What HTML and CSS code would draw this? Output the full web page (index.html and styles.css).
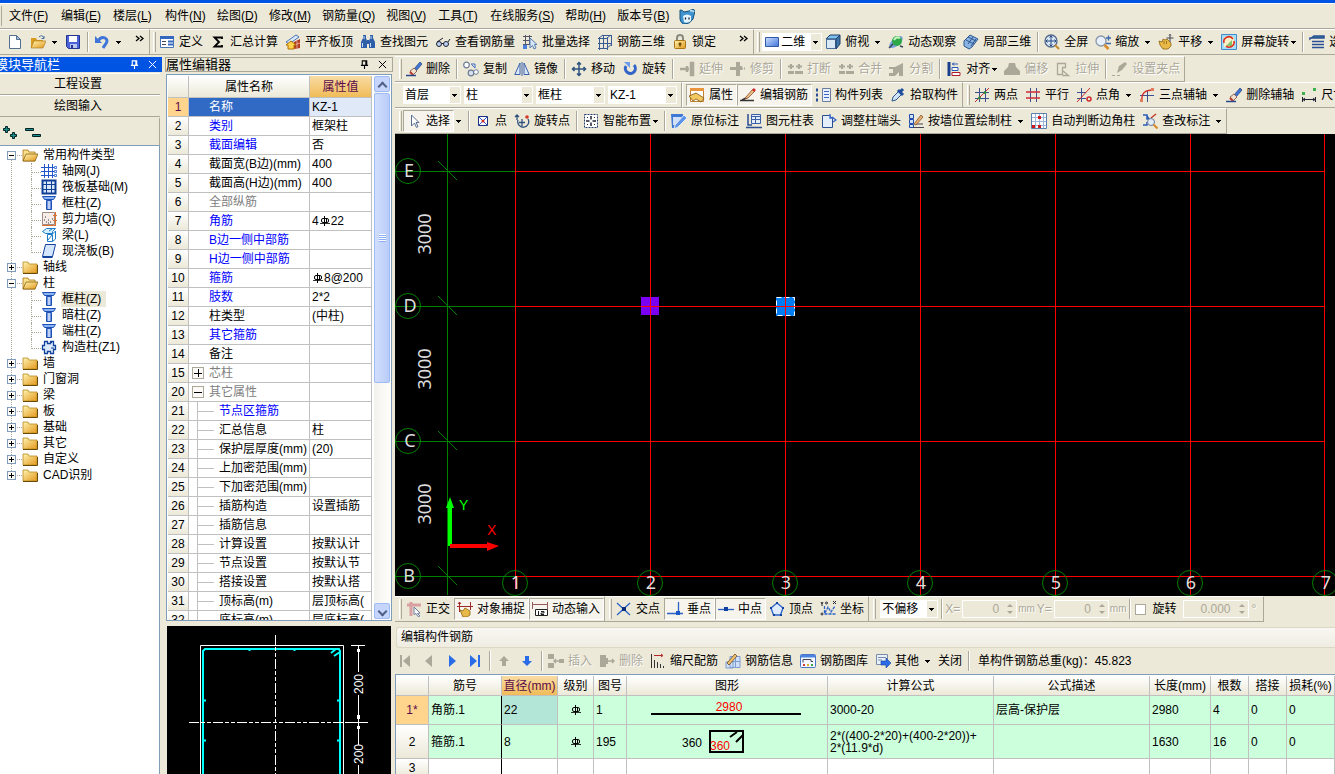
FILE: index.html
```html
<!DOCTYPE html>
<html lang="zh-CN">
<head>
    <meta charset="UTF-8">
    <meta name="viewport" content="width=device-width, initial-scale=1.0">
    <title>钢筋抽样</title>
    <link rel="stylesheet" href="styles.css">
</head>
<body>
    <!-- Icon library -->
    <svg class="defs" width="0" height="0" aria-hidden="true">
        <defs>
            <linearGradient id="gold" x1="0" y1="0" x2="1" y2="1"><stop offset="0" stop-color="#fff3b0"/><stop offset="1" stop-color="#e2981c"/></linearGradient>
            <linearGradient id="blue" x1="0" y1="0" x2="1" y2="1"><stop offset="0" stop-color="#cfe0ff"/><stop offset="1" stop-color="#3f74d8"/></linearGradient>
            <linearGradient id="steel" x1="0" y1="0" x2="1" y2="0"><stop offset="0" stop-color="#1f55c8"/><stop offset=".5" stop-color="#e4efff"/><stop offset="1" stop-color="#1f55c8"/></linearGradient>
        </defs>
        <symbol id="i-new" viewBox="0 0 16 16"><path d="M2.500 1.500h7l4 4v9h-11z" fill="#fff" stroke="#55708f"/><path d="M9.500 1.500v4h4z" fill="#9fc0e8" stroke="#55708f"/></symbol>
        <symbol id="i-open" viewBox="0 0 16 16"><path d="M1 4h5l1 2h6v8H1z" fill="#d99a22"/><path d="M4 7h12l-3 7H1z" fill="url(#gold)" stroke="#a87512" stroke-width=".6"/><path d="M9 3q3-3 5 1m0-2v2.500h-2.500" fill="none" stroke="#4a6f9c"/></symbol>
        <symbol id="i-save" viewBox="0 0 16 16"><path d="M1.500 1.500h13v13h-11l-2-2z" fill="#4a63d8" stroke="#24358f"/><path d="M4 2h8v6H4z" fill="#fff"/><path d="M5 10h7v4H5z" fill="#b9c6ef"/><path d="M6 11h2v3H6z" fill="#24358f"/></symbol>
        <symbol id="i-undo" viewBox="0 0 16 16"><path d="M1 2v7h7z" fill="#3f74d8"/><path d="M4 7q3-5 7-3t0 7l-2 3" fill="none" stroke="#3f74d8" stroke-width="3"/></symbol>
        <symbol id="i-more" viewBox="0 0 10 16"><path d="M1 2l3 2.500L1 7M5 2l3 2.500L5 7" fill="none" stroke="#000" stroke-width="1.300"/></symbol>
        <symbol id="i-define" viewBox="0 0 16 16"><path d="M1.500 2.500h13v11h-13z" fill="#fff" stroke="#4a76b8"/><path d="M1 2h14v3H1z" fill="#3468c0"/><path d="M3 7.500h4M3 10.500h4" stroke="#445"/><path d="M9 7.500h5M9 10.500h5" stroke="#3468c0" stroke-width="2"/></symbol>
        <symbol id="i-sum" viewBox="0 0 16 16"><path d="M12 5V3.500H4.500L9 8l-4.500 4.500H12V11" fill="none" stroke="#000" stroke-width="1.800"/></symbol>
        <symbol id="i-roof" viewBox="0 0 16 16"><path d="M1 8l10-7 3 2-10 7z" fill="#dbe8f8" stroke="#4a76b8"/><path d="M9 8l6-3v9l-6 1z" fill="#b53a22"/><path d="M9 11l6-2M12 7v7" stroke="#f3d0c0" stroke-width=".7"/><path d="M1 11l5-4 5 4H9v4H3v-4z" fill="#ffd34d" stroke="#b07000"/></symbol>
        <symbol id="i-find" viewBox="0 0 16 16"><path d="M3 1h3v3l1 3v7H1V8l2-4zM10 1h3v3l2 4v6H9V7l1-3zM7 6h2v4H7z" fill="#2f5fa8"/><path d="M2.500 9v4M10.500 9v4M4 2v3M11 2v3" stroke="#c6dcf6"/></symbol>
        <symbol id="i-glasses" viewBox="0 0 16 16"><circle cx="4" cy="10" r="2.500" fill="#b8cff0" stroke="#223"/><circle cx="11" cy="10" r="2.500" fill="#b8cff0" stroke="#223"/><path d="M6.500 9.500h2M2 8l6-4M13 8l2-3" fill="none" stroke="#223"/></symbol>
        <symbol id="i-batch" viewBox="0 0 16 16"><path d="M1 2.500h9M1 6.500h9M1 10.500h6M3.500 1v10M7.500 1v10" stroke="#556" fill="none"/><path d="M1 11h4v4H1z" fill="#4a80e0"/><path d="M8 4v10l2.500-2.500L12 15l2-1-1.500-3.500H15z" fill="#d8e6fa" stroke="#5a7fae"/></symbol>
        <symbol id="i-frame" viewBox="0 0 16 16"><path d="M1 4.500h10M5 1.500h10M1 9.500h14M1 14.500h10M2.500 3v13M6.500 1v14M10.500 3v13M14.500 1v11M2 4l4-3M10 4l4-3M10 14l5-4" stroke="#3a5c94" fill="none"/></symbol>
        <symbol id="i-lock" viewBox="0 0 16 16"><path d="M5 7V4q0-3 3-3t3 3v3" fill="none" stroke="#8a8a80" stroke-width="2"/><rect x="2.500" y="6.500" width="11" height="8" rx="1" fill="url(#gold)" stroke="#a87512"/><path d="M8 8.500v4M6.500 10h3" stroke="#6b4700" stroke-width="1.500"/></symbol>
        <symbol id="i-rect" viewBox="0 0 16 16"><path d="M1.500 3.500h13v9h-13z" fill="url(#blue)" stroke="#3358a8"/></symbol>
        <symbol id="i-cube" viewBox="0 0 16 16"><path d="M1 5l4-4h10l-4 4z" fill="#7fc0ee" stroke="#1c3c66"/><path d="M1.500 5.500h9v9h-9z" fill="#d8e8f4" stroke="#4a6f9c"/><path d="M11 5l4-4v9l-4 5z" fill="#3f74a8" stroke="#1c3c66"/></symbol>
        <symbol id="i-orbit" viewBox="0 0 16 16"><ellipse cx="8" cy="8" rx="8" ry="4" transform="rotate(-40 8 8)" fill="#7ca0d8"/><circle cx="9" cy="7" r="5" fill="#2fa84a"/><path d="M6 6q2-4 6-2" stroke="#c4f4c0" stroke-width="2" fill="none"/><path d="M1 14l4-4M12 12l3 1" stroke="#345" stroke-width="1.500"/></symbol>
        <symbol id="i-part3d" viewBox="0 0 16 16"><path d="M1 7l6-6 8 4-6 8-3 2-5-3z" fill="#8ab4e4" stroke="#2d578e"/><path d="M3 6l8 4M5 3l8 4M5 10l5-7M8 12l5-7" stroke="#2d578e" fill="none"/></symbol>
        <symbol id="i-full" viewBox="0 0 16 16"><circle cx="7" cy="7" r="6" fill="#dce9f8" stroke="#51678a" stroke-width="1.300"/><path d="M7 2v10M2 7h10M5.500 3.500L7 2l1.500 1.500M5.500 10.500L7 12l1.500-1.500M3.500 5.500L2 7l1.500 1.500M10.500 5.500L12 7l-1.500 1.500" stroke="#24487e" fill="none"/><path d="M11 11l4 4" stroke="#c88a2a" stroke-width="2"/></symbol>
        <symbol id="i-zoom" viewBox="0 0 16 16"><circle cx="6" cy="7" r="5" fill="#e8f1fb" stroke="#8a97a8" stroke-width="1.300"/><path d="M9.500 11l4 4" stroke="#d88a2a" stroke-width="2.500"/><path d="M11 4h5M13.500 1.500v5M11 9.500h5" stroke="#3d68b0" stroke-width="1.300"/></symbol>
        <symbol id="i-pan" viewBox="0 0 16 16"><path d="M1 7l3 1 1-3 2 1 2-1 4 4v3l-3 3H5l-3-4z" fill="#e8b848" stroke="#8f6410" stroke-width=".8"/><path d="M6 7v3M8.500 7v3" stroke="#8f6410" stroke-width=".8"/><path d="M12 0v8M8.500 4h7M11 1.500L12 .5l1 1" stroke="#445" fill="none"/></symbol>
        <symbol id="i-rotscreen" viewBox="0 0 16 16"><path d="M.5.500h15v15H.5z" fill="#a8dcf4" stroke="#3f8ccc"/><path d="M3 3h10v10H3z" fill="#f6f2c8"/><path d="M5 12l6-6v6z" fill="#86c46a"/><path d="M3 9a5 5 0 019-4M13 7a5 5 0 01-8 5" fill="none" stroke="#e02a1c" stroke-width="1.600"/></symbol>
        <symbol id="i-layers" viewBox="0 0 16 16"><path d="M1 5l4-3h10v2H1zM3 7.500h12M3 10.500h12M3 13.500h12" fill="#2f8c9a" stroke="#2a4f94" stroke-width="1.500"/></symbol>
        <symbol id="i-brush" viewBox="0 0 16 16"><path d="M8 8l6-7 2 2-6 7z" fill="#3f74d8" stroke="#223c70" stroke-width=".7"/><path d="M4 10l4-3 3 3-4 4z" fill="#f0e0d0" stroke="#7a4a3a" stroke-width=".8"/><path d="M4 11l3 3" stroke="#c03a2a" stroke-width="2"/><path d="M0 14.500h10" stroke="#28488c" stroke-width="1.500"/></symbol>
        <symbol id="i-copy" viewBox="0 0 16 16"><circle cx="3.500" cy="4" r="2.800" fill="#fff" stroke="#6c7c94" stroke-width="1.200"/><circle cx="8" cy="12" r="2.800" fill="#d8e0ea" stroke="#6c7c94" stroke-width="1.200"/><circle cx="13" cy="11" r="2.300" fill="#fff" stroke="#6c7c94"/><path d="M8 3h4v4M8.500 3.500L12 7" stroke="#3d68c8" fill="none"/></symbol>
        <symbol id="i-mirror" viewBox="0 0 16 16"><path d="M6 2v11.500H.8zM10 2v11.500h5.200z" fill="#dbe8fa" stroke="#3a60a8"/><path d="M8 1v14" stroke="#3a60a8"/></symbol>
        <symbol id="i-move" viewBox="0 0 16 16"><path d="M8 1v14M1 8h14M6 3.500L8 1.500l2 2M6 12.500l2 2 2-2M3.500 6l-2 2 2 2M12.500 6l2 2-2 2" fill="none" stroke="#2f527e" stroke-width="1.500"/></symbol>
        <symbol id="i-rotate" viewBox="0 0 16 16"><path d="M12 4a5 5 0 11-8 1" fill="none" stroke="#3464c8" stroke-width="3"/><path d="M2 1h6v6z" fill="#6f9cec"/></symbol>
        <symbol id="i-extend" viewBox="0 0 16 16"><path d="M1 8h6M8 5v6M8 8h2M12 2h2v12h-2z" stroke="#aca899" stroke-width="2.500"/></symbol>
        <symbol id="i-trim" viewBox="0 0 16 16"><path d="M6 1h4v4h2v4h-2v6H6V9H0V6h6z" fill="#aca899"/><path d="M12 7.500h4" stroke="#aca899" stroke-width="2" stroke-dasharray="1 1"/></symbol>
        <symbol id="i-break" viewBox="0 0 16 16"><path d="M1 10h6v3H1zM8 10h8v3H8z" fill="#aca899"/><path d="M1 5.500h6M9 5.500h6M4 3v5M12 3v5" stroke="#aca899" stroke-width="2"/></symbol>
        <symbol id="i-split" viewBox="0 0 16 16"><path d="M0 6h6l8-4v13h-4v-4l-4 4H0v-3h4V8H0z" fill="#aca899"/></symbol>
        <symbol id="i-align" viewBox="0 0 16 16"><path d="M3 1v14" stroke="#1b3f8c" stroke-width="3"/><path d="M6 6.500h6v3H6z" fill="#fff" stroke="#2858b8"/><path d="M6 11.500h8v3H6z" fill="#fff" stroke="#b01c2c"/><path d="M6 3h6M8 1.500L6.500 3 8 4.500" stroke="#2858b8" fill="none"/></symbol>
        <symbol id="i-offset" viewBox="0 0 16 16"><path d="M5 2h6l1 4 4 4v4H0v-4l4-4z" fill="#aca899"/></symbol>
        <symbol id="i-stretch" viewBox="0 0 16 16"><path d="M2.500 2.500h8v4h-3v7h-5zM7.500 9.500l6 5h-6" fill="none" stroke="#aca899" stroke-width="1.300"/></symbol>
        <symbol id="i-grip" viewBox="0 0 16 16"><path d="M5 12l2-7 6-4 2 2-5 6z" fill="#aca899"/><path d="M0 14.500h10" stroke="#aca899" stroke-dasharray="3 2"/></symbol>
        <symbol id="i-props" viewBox="0 0 16 16"><path d="M1.500 1.500h13v13h-13z" fill="#fff" stroke="#c08030"/><path d="M1 1h14v3H1z" fill="#e8953c"/><path d="M0 9l7-3 8 5-3 4-5-3-3 2z" fill="#f4c860" stroke="#7a5410" stroke-width=".8"/></symbol>
        <symbol id="i-editbar" viewBox="0 0 16 16"><path d="M0 13.500h14M2 13l6-3" stroke="#333" stroke-width="1.500" fill="none"/><path d="M6 10l7-8 2 2-7 7-3 1z" fill="#e8c088" stroke="#8a4a2a" stroke-width=".8"/><path d="M13 2l2 2" stroke="#d02a2a" stroke-width="2.500"/></symbol>
        <symbol id="i-list" viewBox="0 0 16 16"><path d="M1 3h3M1 8h3M1 13h3" stroke="#2a4f94" stroke-width="3" stroke-dasharray="2 1"/><path d="M7.500 1.500h8v13h-8z" fill="#e8f0fb" stroke="#6a7c9c"/><path d="M9 4.500h5M9 7.500h5M9 10.500h5" stroke="#3d68c8"/></symbol>
        <symbol id="i-pick" viewBox="0 0 16 16"><path d="M2 14l1-4 6-6 3 3-6 6z" fill="#cfe4f8" stroke="#2d578e"/><path d="M8 3l5 5M10 5l3-3" stroke="#1f4c9c" stroke-width="3"/></symbol>
        <symbol id="i-twopt" viewBox="0 0 16 16"><path d="M1 5.500h14M1 11.500h14M5.500 1v14M11.500 1v14" stroke="#3c5090"/><path d="M1 15L15 1" stroke="#c03030"/><circle cx="5.500" cy="11" r="1.500" fill="#2f8c3a"/><circle cx="11" cy="5.500" r="1.500" fill="#2f8c3a"/></symbol>
        <symbol id="i-parallel" viewBox="0 0 16 16"><path d="M5.500 1v14M11.500 1v14" stroke="#3c5090"/><path d="M1 5h14M1 11h14" stroke="#d02a3a" stroke-width="1.500"/></symbol>
        <symbol id="i-angle" viewBox="0 0 16 16"><path d="M1 5.500h9M1 11.500h9M5.500 1v14" stroke="#3c5090"/><path d="M1 15L14 1" stroke="#d02a2a"/><circle cx="13" cy="12" r="2" fill="none" stroke="#d02a2a" stroke-width="1.500"/></symbol>
        <symbol id="i-threept" viewBox="0 0 16 16"><path d="M1 8.500h14M8.500 3v12" stroke="#3c5090"/><path d="M3 13Q2 3 14 3" fill="none" stroke="#d02a2a" stroke-width="1.300"/><path d="M12 1h3v3h-3zM1 12h3v3H1z" fill="#e07a5a"/></symbol>
        <symbol id="i-dim" viewBox="0 0 16 16"><path d="M1 5h3v3H1zM12 1h3v3h-3z" fill="#3fb04a"/><path d="M1.500 10v5M14.500 10v5M2 12.500h12M4 11l-2 1.500L4 14M12 11l2 1.500-2 1.500" stroke="#223" fill="none"/></symbol>
        <symbol id="i-cursor" viewBox="0 0 16 16"><path d="M5.500 2v11l3-3 2 4.500 1.500-1-2-4h3z" fill="#fff" stroke="#5b6f94"/></symbol>
        <symbol id="i-point" viewBox="0 0 16 16"><path d="M3.500 3.500h9v9h-9z" fill="#fff" stroke="#1b3080"/><path d="M4 4l8 8M12 4l-8 8" stroke="#3358c8"/><circle cx="8" cy="8" r="1.500" fill="#d02a2a"/></symbol>
        <symbol id="i-rotpt" viewBox="0 0 16 16"><path d="M3 3v4M1 4l2-2 2 2M4 7a5.500 5.500 0 1010-1M8 6v7M5 9.500h6" stroke="#2f527e" fill="none" stroke-width="1.300"/><circle cx="13" cy="4" r="1.800" fill="#d03a2a"/></symbol>
        <symbol id="i-smart" viewBox="0 0 16 16"><path d="M1.500 1.500h13v13h-13z" fill="#fff" stroke="#223c70" stroke-dasharray="2 1"/><path d="M8 3v3.500M8 9.500V13M3 8h3.500M9.500 8H13" stroke="#223" stroke-width="1.500"/><path d="M4 4.500h1M11 4.500h1M4 11.500h1M11 11.500h1" stroke="#223"/></symbol>
        <symbol id="i-inplace" viewBox="0 0 16 16"><path d="M0 1h12v5l-6 9H1z" fill="#3f78d4"/><path d="M2 4h8v4l-5 4H2z" fill="#cfe0f8"/><path d="M4 12l9-10 3 3-9 9-4 2z" fill="#5d94e8" stroke="#e4eefb"/></symbol>
        <symbol id="i-coltable" viewBox="0 0 16 16"><path d="M2 1v11h4M0 14.500h16" stroke="#2a4f94" stroke-width="1.500" fill="none"/><path d="M5.500 1.500h9v9h-9z" fill="#e4eefb" stroke="#3a60a8"/><path d="M5 3.500h10M6 6.500h8M9.500 4v6" stroke="#3a60a8"/></symbol>
        <symbol id="i-adjust" viewBox="0 0 16 16"><path d="M1.500 2.500h7l3 3v9h-10z" fill="#e4eefb" stroke="#2a4f94"/><path d="M11 4l4 3-3 2M9 1v4h4" stroke="#3464c8" fill="none" stroke-width="1.300"/></symbol>
        <symbol id="i-wallcol" viewBox="0 0 16 16"><path d="M1.500 1.500h4v4h-4zM1.500 6.500h4v4h-4zM1.500 11.500h4v3h-4z" fill="#cfe0f8" stroke="#1f4ca8"/><path d="M5 14.500h11M7 11h8" stroke="#445"/><path d="M6 11l7-9 2 2-7 8z" fill="#e8b070" stroke="#80502a" stroke-width=".8"/></symbol>
        <symbol id="i-auto" viewBox="0 0 16 16"><path d="M.5.500h15v15H.5z" fill="#fff" stroke="#5b7fae"/><path d="M4.500 1v14M8.500 1v14M12.500 1v14M1 4.500h14M1 8.500h14M1 12.500h14" stroke="#9db6d8"/><path d="M7 3h3v3H7zM1 12h3v3H1zM7 12h3v3H7z" fill="#d0181c"/></symbol>
        <symbol id="i-check" viewBox="0 0 16 16"><path d="M1 2h4v4h3M1 12h4V9M5 3l6 9" fill="none" stroke="#2a5cb8" stroke-width="1.500"/><path d="M9 5l5-4" stroke="#c03a2a" stroke-width="1.500"/><circle cx="9" cy="9" r="3.500" fill="#e0ecf8" stroke="#6a7c9c"/><path d="M11.500 11.500l4 4" stroke="#d88a2a" stroke-width="2"/></symbol>
        <symbol id="i-pin" viewBox="0 0 10 10"><path d="M2.500 6V1h5v5M1 6h8M5 6v4M6.500 1v5" fill="none" stroke="currentColor" stroke-width="1.200"/></symbol>
        <symbol id="i-close" viewBox="0 0 10 10"><path d="M1 1l8 8M9 1L1 9" stroke="currentColor" stroke-width="1.100"/></symbol>
        <symbol id="i-expand" viewBox="0 0 16 16"><path d="M3.500 2.500h2v2h2v2h-2v2h-2v-2h-2v-2h2zM10.500 8.500h2v2h2v2h-2v2h-2v-2h-2v-2h2z" fill="#1c8c8c" stroke="#022"/></symbol>
        <symbol id="i-collapse" viewBox="0 0 16 16"><path d="M.5 4.500h8v2h-8zM7.500 10.500h8v2h-8z" fill="#1c8c8c" stroke="#022"/></symbol>
        <symbol id="i-folder" viewBox="0 0 16 16"><path d="M1 3h5l1 2h8v9H1z" fill="url(#gold)" stroke="#b98a20" stroke-width=".8"/><path d="M1 14.500h14.500V6" fill="none" stroke="#6b4a08"/></symbol>
        <symbol id="i-folderopen" viewBox="0 0 16 16"><path d="M1 3h5l1 2h6v9H1z" fill="#f8e08c" stroke="#a87512" stroke-width=".8"/><path d="M4 7h12l-3 7H1z" fill="url(#gold)" stroke="#8a6010" stroke-width=".8"/></symbol>
        <symbol id="i-axis" viewBox="0 0 16 16"><path d="M0 4.500h13M0 8.500h13M0 12.500h13M3.500 1v14M7.500 1v14M11.500 1v14" stroke="#1f55c8"/><path d="M13.500 3.500h2v2h-2zM13.500 7.500h2v2h-2zM13.500 11.500h2v2h-2z" fill="#fff" stroke="#4a7cd8"/></symbol>
        <symbol id="i-raft" viewBox="0 0 16 16"><path d="M1.500 1.500h13v13h-13z" fill="#d8e6fa" stroke="#0e3f94" stroke-width="2"/><path d="M5.500 2v12M10.500 2v12M2 5.500h12M2 10.500h12" stroke="#0e3f94"/></symbol>
        <symbol id="i-column" viewBox="0 0 16 16"><path d="M1.500 1.500h13l-2 3h-9z" fill="#8ab4f4" stroke="#1c50b4"/><path d="M5.500 5.500h5v9h-5z" fill="url(#steel)" stroke="#1c50b4"/></symbol>
        <symbol id="i-wall" viewBox="0 0 16 16"><path d="M1.500 1.500h12v12h-12z" fill="#f8ece8" stroke="#9c8c88"/><path d="M3 9h1M5 11h1M7 9h1M9 11h1M4 6h1M11 8h1M7 12h1" stroke="#333"/><path d="M14.500 1v14M12 4.500h4M12 9.500h4M1 14.500h13" stroke="#e0702a"/></symbol>
        <symbol id="i-beam" viewBox="0 0 16 16"><path d="M1.500 4.500l4-3h9l-3 3v2h-7z" fill="#d4f0ff" stroke="#1c7cc8"/><path d="M6.500 7.500h5v7h-5zM11.500 7l3-3v8l-3 2.500M7 13l4-5M8 4l3-2" fill="none" stroke="#1c7cc8"/></symbol>
        <symbol id="i-slab" viewBox="0 0 16 16"><path d="M4.500 1.500h10l-3 12h-10z" fill="#d4e6fb" stroke="#12429c"/><path d="M1.500 14h10" stroke="#12429c" stroke-width="2"/></symbol>
        <symbol id="i-tie" viewBox="0 0 16 16"><path d="M3.500 2.500h3v2h3v-2h3v4h2v4h-2v4h-3v-2h-3v2h-3v-4h-2v-4h2z" fill="#dce9fb" stroke="#12429c" stroke-width="1.300"/><path d="M10 4l2-2M10 9h3" stroke="#12429c"/></symbol>
        <symbol id="i-ortho" viewBox="0 0 16 16"><path d="M1 4h14M5 1v14" stroke="#d8a0a0" stroke-width="3"/><path d="M8 6l6 6-2.500.5L14 15l-2 .5-2-3-2 1z" fill="#fff" stroke="#6a7c9c"/></symbol>
        <symbol id="i-snap" viewBox="0 0 16 16"><path d="M0 5.500h16M2.500 1v10M13.500 1v8M1 3l1.500-2L4 3" stroke="#a02828" fill="none"/><path d="M3 9l3 1 2-3 5 3v4l-3 2H6z" fill="#e8b848" stroke="#8f6410" stroke-width=".8"/></symbol>
        <symbol id="i-dyn" viewBox="0 0 16 16"><path d="M.5 1v7M15.500 1v7M1 3.500h14" stroke="#98585a"/><path d="M3.500 8.500h12v6h-12z" fill="#fff" stroke="#222"/><path d="M6.500 10v4M9 10.500h3v1.500H9v1.500h3" stroke="#222" fill="none"/></symbol>
        <symbol id="i-cross" viewBox="0 0 16 16"><path d="M1 2l13 12M14 2L1 14" stroke="#2a62c8" stroke-width="1.300"/><path d="M6 6h4v4H6z" fill="#0c2c7c"/></symbol>
        <symbol id="i-perp" viewBox="0 0 16 16"><path d="M0 12.500h16M11.500 1v12" stroke="#2a62c8" stroke-width="1.300"/><path d="M9 10h4v4H9z" fill="#1c58c8"/></symbol>
        <symbol id="i-mid" viewBox="0 0 16 16"><path d="M0 8.500h16" stroke="#2a62c8" stroke-width="1.300"/><path d="M6 6h4v4H6z" fill="#1040a0"/></symbol>
        <symbol id="i-vertex" viewBox="0 0 16 16"><path d="M8 2l6 5-2.500 7h-7L2 7z" fill="#e0ecfb" stroke="#2a62c8" stroke-width="1.300"/><path d="M7 1h2v2H7zM1 6h2v2H1zM13 6h2v2h-2zM4 13h2v2H4zM11 13h2v2h-2z" fill="#1040a0"/></symbol>
        <symbol id="i-coord" viewBox="0 0 16 16"><path d="M4.500 5v8h11M5 12l3-6 3 5 4-6" stroke="#2a62c8" fill="none" stroke-width="1.300" stroke-dasharray="3 1"/><path d="M1 1l1 2v2M3 1L2 3M13 0l3 3M16 0l-3 3" stroke="#223" fill="none"/><circle cx="6.500" cy="2" r="1" fill="none" stroke="#223"/><circle cx="2" cy="13" r="1" fill="none" stroke="#223"/></symbol>
        <symbol id="i-first" viewBox="0 0 16 16"><path d="M2 2h2v12H2zM12 2v12L5 8z" fill="#aca899"/></symbol>
        <symbol id="i-prev" viewBox="0 0 16 16"><path d="M11 2v12L4 8z" fill="#aca899"/></symbol>
        <symbol id="i-next" viewBox="0 0 16 16"><path d="M5 2v12l7-6z" fill="#2a6ce8"/></symbol>
        <symbol id="i-last" viewBox="0 0 16 16"><path d="M3 2v12l7-6zM11 2h2v12h-2z" fill="#2a6ce8"/></symbol>
        <symbol id="i-up" viewBox="0 0 16 16"><path d="M8 3l5 5h-3v5H6V8H3z" fill="#aca899"/></symbol>
        <symbol id="i-down" viewBox="0 0 16 16"><path d="M8 13l5-5h-3V3H6v5H3z" fill="#2a6ce8"/></symbol>
        <symbol id="i-insert" viewBox="0 0 16 16"><path d="M0 1h6v5H0zM0 10h6v5H0zM11 6h5v4h-5z" fill="#aca899"/><path d="M6 8h5M8 6L6 8l2 2" stroke="#aca899" fill="none" stroke-width="1.500"/></symbol>
        <symbol id="i-remove" viewBox="0 0 16 16"><path d="M1 2h6v3h2v6H7v3H1z" fill="#aca899"/><path d="M9 8h6M13 6l2 2-2 2" stroke="#aca899" fill="none" stroke-width="1.500"/></symbol>
        <symbol id="i-scale" viewBox="0 0 16 16"><path d="M1.500 1v14M4.500 7v8M7.500 9v6M10.500 11v4M13.500 13v2" stroke="#333"/><path d="M4 2.500h8M11 1l2 1.500L11 4" stroke="#b02a2a" fill="none"/></symbol>
        <symbol id="i-info" viewBox="0 0 16 16"><path d="M5 3.500h10v11H5zM1 9h7v6H1z" fill="#cfe0f8" stroke="#7c9cd0"/><path d="M10.500 4v10M5 8.500h10" stroke="#7c9cd0"/><path d="M2 10l8-9 2 2-8 9z" fill="#f0c070" stroke="#6b4a20" stroke-width=".8"/></symbol>
        <symbol id="i-gallery" viewBox="0 0 16 16"><rect x=".5" y="1.500" width="15" height="13" rx="1" fill="#f4f8fe" stroke="#4a76c8"/><path d="M1 2h14v2.500H1z" fill="#4a84e0"/><path d="M3 9.500V6.500h8v2h2" stroke="#445" fill="none"/><path d="M3 12h2" stroke="#d03a3a" stroke-width="2"/><path d="M7 12h2" stroke="#e0b02a" stroke-width="2"/><path d="M11 12h2" stroke="#3fa04a" stroke-width="2"/></symbol>
        <symbol id="i-other" viewBox="0 0 16 16"><path d="M1.500 1.500h11v10h-11z" fill="#e8f0fb" stroke="#7c8ca8"/><path d="M3 4.500h8M3 7h4" stroke="#7c8ca8"/><path d="M6 8h5V5l5 5-5 5v-3H6z" fill="#2a6ce8" stroke="#12429c" stroke-width=".6"/></symbol>
        <symbol id="i-globe" viewBox="0 0 16 16"><path d="M1 2q3 0 4 2l5-1q5-3 6 0l-2 8q-3 5-8 5-4 0-5-5z" fill="#3f94d0" stroke="#14507c"/><path d="M4 8q4-3 8 0v5q-4 3-7 1z" fill="#e6f4fb"/><path d="M6.500 9.500v2M10 9.500v2" stroke="#124" stroke-width="1.300"/><path d="M11 3q3-1 4 1" stroke="#bfe6f4" stroke-width="1.500" fill="none"/></symbol>
        <symbol id="i-rebar" viewBox="0 0 12 12"><path d="M5.500 1v10M7.500 3v5" fill="none" stroke="#000"/><rect x="2.500" y="3.500" width="7" height="4" rx="1.500" fill="none" stroke="#000"/><path d="M1 8.500h10" stroke="#000" stroke-width=".8"/></symbol>
    </svg>

    <div class="titlestrip"></div>

    <!-- Menu -->
    <nav class="menubar">
        <span class="grip"></span>
        <button>文件(<u>F</u>)</button>
        <button>编辑(<u>E</u>)</button>
        <button>楼层(<u>L</u>)</button>
        <button>构件(<u>N</u>)</button>
        <button>绘图(<u>D</u>)</button>
        <button>修改(<u>M</u>)</button>
        <button>钢筋量(<u>Q</u>)</button>
        <button>视图(<u>V</u>)</button>
        <button>工具(<u>T</u>)</button>
        <button>在线服务(<u>S</u>)</button>
        <button>帮助(<u>H</u>)</button>
        <button>版本号(<u>B</u>)</button>
        <svg class="ico"><use href="#i-globe"/></svg>
    </nav>

    <!-- Main toolbar -->
    <div class="toolrow main-tools">
        <div class="bar first-bar">
            <button class="tb" aria-label="新建"><svg class="ico"><use href="#i-new"/></svg></button>
            <button class="tb" aria-label="打开"><svg class="ico"><use href="#i-open"/></svg><i class="caret"></i></button>
            <button class="tb" aria-label="保存"><svg class="ico"><use href="#i-save"/></svg></button>
            <span class="sep"></span>
            <button class="tb" aria-label="撤销"><svg class="ico"><use href="#i-undo"/></svg><i class="caret"></i></button>
            <button class="more" aria-label="更多"><svg><use href="#i-more"/></svg></button>
        </div>
        <div class="bar">
            <span class="grip"></span>
            <button class="tb"><svg class="ico"><use href="#i-define"/></svg>定义</button>
            <button class="tb"><svg class="ico"><use href="#i-sum"/></svg>汇总计算</button>
            <button class="tb"><svg class="ico"><use href="#i-roof"/></svg>平齐板顶</button>
            <button class="tb"><svg class="ico"><use href="#i-find"/></svg>查找图元</button>
            <button class="tb"><svg class="ico"><use href="#i-glasses"/></svg>查看钢筋量</button>
            <button class="tb"><svg class="ico"><use href="#i-batch"/></svg>批量选择</button>
            <button class="tb"><svg class="ico"><use href="#i-frame"/></svg>钢筋三维</button>
            <button class="tb"><svg class="ico"><use href="#i-lock"/></svg>锁定</button>
            <button class="more far" aria-label="更多"><svg><use href="#i-more"/></svg></button>
        </div>
        <div class="bar">
            <span class="grip"></span>
            <span class="combo combo-view"><svg class="ico"><use href="#i-rect"/></svg><select aria-label="视图维度"><option>二维</option><option>三维</option></select></span>
            <button class="tb"><svg class="ico"><use href="#i-cube"/></svg>俯视<i class="caret"></i></button>
            <button class="tb"><svg class="ico"><use href="#i-orbit"/></svg>动态观察</button>
            <button class="tb"><svg class="ico"><use href="#i-part3d"/></svg>局部三维</button>
            <span class="sep"></span>
            <button class="tb"><svg class="ico"><use href="#i-full"/></svg>全屏</button>
            <button class="tb"><svg class="ico"><use href="#i-zoom"/></svg>缩放<i class="caret"></i></button>
            <button class="tb"><svg class="ico"><use href="#i-pan"/></svg>平移<i class="caret"></i></button>
            <button class="tb"><svg class="ico"><use href="#i-rotscreen"/></svg>屏幕旋转<i class="caret tight"></i></button>
            <span class="sep"></span>
            <button class="tb"><svg class="ico"><use href="#i-layers"/></svg>选择楼层</button>
        </div>
    </div>

    <div class="workspace">
        <!-- Navigation -->
        <aside class="nav">
            <header class="panel-title active">
                <span class="cut">模块导航栏</span>
                <button aria-label="固定"><svg><use href="#i-pin"/></svg></button>
                <button aria-label="关闭"><svg><use href="#i-close"/></svg></button>
            </header>
            <button class="nav-tab">工程设置</button>
            <button class="nav-tab">绘图输入</button>
            <div class="nav-tools">
                <button aria-label="全部展开"><svg class="ico"><use href="#i-expand"/></svg></button>
                <button aria-label="全部折叠"><svg class="ico"><use href="#i-collapse"/></svg></button>
            </div>
            <ul class="tree">
                <li><div class="node"><b class="box minus"></b><svg class="ico"><use href="#i-folderopen"/></svg><span>常用构件类型</span></div>
                    <ul>
                        <li><svg class="ico"><use href="#i-axis"/></svg><span>轴网(J)</span></li>
                        <li><svg class="ico"><use href="#i-raft"/></svg><span>筏板基础(M)</span></li>
                        <li><svg class="ico"><use href="#i-column"/></svg><span>框柱(Z)</span></li>
                        <li><svg class="ico"><use href="#i-wall"/></svg><span>剪力墙(Q)</span></li>
                        <li><svg class="ico"><use href="#i-beam"/></svg><span>梁(L)</span></li>
                        <li><svg class="ico"><use href="#i-slab"/></svg><span>现浇板(B)</span></li>
                    </ul>
                </li>
                <li><div class="node"><b class="box plus"></b><svg class="ico"><use href="#i-folder"/></svg><span>轴线</span></div></li>
                <li><div class="node"><b class="box minus"></b><svg class="ico"><use href="#i-folderopen"/></svg><span>柱</span></div>
                    <ul>
                        <li><svg class="ico"><use href="#i-column"/></svg><span class="current">框柱(Z)</span></li>
                        <li><svg class="ico"><use href="#i-column"/></svg><span>暗柱(Z)</span></li>
                        <li><svg class="ico"><use href="#i-column"/></svg><span>端柱(Z)</span></li>
                        <li><svg class="ico"><use href="#i-tie"/></svg><span>构造柱(Z1)</span></li>
                    </ul>
                </li>
                <li><div class="node"><b class="box plus"></b><svg class="ico"><use href="#i-folder"/></svg><span>墙</span></div></li>
                <li><div class="node"><b class="box plus"></b><svg class="ico"><use href="#i-folder"/></svg><span>门窗洞</span></div></li>
                <li><div class="node"><b class="box plus"></b><svg class="ico"><use href="#i-folder"/></svg><span>梁</span></div></li>
                <li><div class="node"><b class="box plus"></b><svg class="ico"><use href="#i-folder"/></svg><span>板</span></div></li>
                <li><div class="node"><b class="box plus"></b><svg class="ico"><use href="#i-folder"/></svg><span>基础</span></div></li>
                <li><div class="node"><b class="box plus"></b><svg class="ico"><use href="#i-folder"/></svg><span>其它</span></div></li>
                <li><div class="node"><b class="box plus"></b><svg class="ico"><use href="#i-folder"/></svg><span>自定义</span></div></li>
                <li><div class="node"><b class="box plus"></b><svg class="ico"><use href="#i-folder"/></svg><span>CAD识别</span></div></li>
            </ul>
        </aside>

        <!-- Property editor -->
        <section class="props">
            <header class="panel-title">
                <span>属性编辑器</span>
                <button aria-label="固定"><svg><use href="#i-pin"/></svg></button>
                <button aria-label="关闭"><svg><use href="#i-close"/></svg></button>
            </header>
            <div class="prop-box">
                <table class="grid prop-grid">
                    <colgroup><col class="c-no"><col class="c-name"><col class="c-value"></colgroup>
                    <thead><tr><th></th><th>属性名称</th><th class="hot">属性值</th></tr></thead>
                    <tbody>
                        <tr class="selected"><th class="hot">1</th><td>名称</td><td>KZ-1</td></tr>
                        <tr><th>2</th><td class="key">类别</td><td>框架柱</td></tr>
                        <tr><th>3</th><td class="key">截面编辑</td><td>否</td></tr>
                        <tr><th>4</th><td>截面宽(B边)(mm)</td><td>400</td></tr>
                        <tr><th>5</th><td>截面高(H边)(mm)</td><td>400</td></tr>
                        <tr><th>6</th><td class="dim">全部纵筋</td><td></td></tr>
                        <tr><th>7</th><td class="key">角筋</td><td>4<svg class="rebar"><use href="#i-rebar"/></svg>22</td></tr>
                        <tr><th>8</th><td class="key">B边一侧中部筋</td><td></td></tr>
                        <tr><th>9</th><td class="key">H边一侧中部筋</td><td></td></tr>
                        <tr><th>10</th><td class="key">箍筋</td><td><svg class="rebar"><use href="#i-rebar"/></svg>8@200</td></tr>
                        <tr><th>11</th><td class="key">肢数</td><td>2*2</td></tr>
                        <tr><th>12</th><td>柱类型</td><td>(中柱)</td></tr>
                        <tr><th>13</th><td class="key">其它箍筋</td><td></td></tr>
                        <tr><th>14</th><td>备注</td><td></td></tr>
                        <tr><th>15</th><td class="dim group"><b class="box plus"></b>芯柱</td><td></td></tr>
                        <tr><th>20</th><td class="dim group"><b class="box minus"></b>其它属性</td><td></td></tr>
                        <tr class="child"><th>21</th><td class="key">节点区箍筋</td><td></td></tr>
                        <tr class="child"><th>22</th><td>汇总信息</td><td>柱</td></tr>
                        <tr class="child"><th>23</th><td>保护层厚度(mm)</td><td>(20)</td></tr>
                        <tr class="child"><th>24</th><td>上加密范围(mm)</td><td></td></tr>
                        <tr class="child"><th>25</th><td>下加密范围(mm)</td><td></td></tr>
                        <tr class="child"><th>26</th><td>插筋构造</td><td>设置插筋</td></tr>
                        <tr class="child"><th>27</th><td>插筋信息</td><td></td></tr>
                        <tr class="child"><th>28</th><td>计算设置</td><td>按默认计</td></tr>
                        <tr class="child"><th>29</th><td>节点设置</td><td>按默认节</td></tr>
                        <tr class="child"><th>30</th><td>搭接设置</td><td>按默认搭</td></tr>
                        <tr class="child"><th>31</th><td>顶标高(m)</td><td>层顶标高(</td></tr>
                        <tr class="child"><th>32</th><td>底标高(m)</td><td>层底标高(</td></tr>
                    </tbody>
                </table>
                <div class="scroll">
                    <button class="arrow-up" aria-label="向上"></button>
                    <div class="thumb"><i></i></div>
                    <button class="arrow-down" aria-label="向下"></button>
                </div>
            </div>
            <svg class="preview" role="img" aria-label="柱截面">
                <path d="M33.500 150V19.500h143V150" fill="none" stroke="#fff"/>
                <path d="M36 150V25l2-2h134l1 2V150" fill="none" stroke="#0ff" stroke-width="2"/>
                <path d="M164 27l5-4M167 30l6-4M36 74.500h3M36 114.500h3M170 74.500h3M170 114.500h3M82.500 23v2M127.500 23v2" stroke="#0ff" stroke-width="2"/>
                <path d="M108.500 9v141M22 96.500h164" stroke="#fff" stroke-dasharray="10 2 4 2 4 2"/>
                <path d="M184 19.500h14M182 96.500h19M191.500 19v27M191.500 69v50M191.500 139v12" stroke="#fff"/>
                <path d="M190 23h3v3h-3zM190 89h3v4h-3zM190 100h3v3h-3z" fill="#fff"/>
                <text transform="translate(196 58) rotate(-90)">200</text>
                <text transform="translate(196 128) rotate(-90)">200</text>
            </svg>
        </section>

        <!-- Drawing area -->
        <main class="draw">
            <div class="toolrow">
                <div class="bar">
                    <span class="grip"></span>
                    <button class="tb"><svg class="ico"><use href="#i-brush"/></svg>删除</button>
                    <span class="sep"></span>
                    <button class="tb"><svg class="ico"><use href="#i-copy"/></svg>复制</button>
                    <button class="tb"><svg class="ico"><use href="#i-mirror"/></svg>镜像</button>
                    <span class="sep"></span>
                    <button class="tb"><svg class="ico"><use href="#i-move"/></svg>移动</button>
                    <button class="tb"><svg class="ico"><use href="#i-rotate"/></svg>旋转</button>
                    <span class="sep"></span>
                    <button class="tb" disabled><svg class="ico"><use href="#i-extend"/></svg>延伸</button>
                    <button class="tb" disabled><svg class="ico"><use href="#i-trim"/></svg>修剪</button>
                    <span class="sep"></span>
                    <button class="tb" disabled><svg class="ico"><use href="#i-break"/></svg>打断</button>
                    <button class="tb" disabled><svg class="ico"><use href="#i-break"/></svg>合并</button>
                    <button class="tb" disabled><svg class="ico"><use href="#i-split"/></svg>分割</button>
                    <span class="sep"></span>
                    <button class="tb"><svg class="ico"><use href="#i-align"/></svg>对齐<i class="caret tight"></i></button>
                    <button class="tb" disabled><svg class="ico"><use href="#i-offset"/></svg>偏移</button>
                    <button class="tb" disabled><svg class="ico"><use href="#i-stretch"/></svg>拉伸</button>
                    <span class="sep"></span>
                    <button class="tb" disabled><svg class="ico"><use href="#i-grip"/></svg>设置夹点</button>
                </div>
            </div>
            <div class="toolrow">
                <div class="bar combos">
                    <span class="combo combo-s"><select aria-label="楼层"><option>首层</option></select></span>
                    <span class="combo"><select aria-label="构件分类"><option>柱</option></select></span>
                    <span class="combo"><select aria-label="构件类型"><option>框柱</option></select></span>
                    <span class="combo"><select aria-label="构件"><option>KZ-1</option></select></span>
                </div>
                <div class="bar pad">
                    <button class="tb pressed"><svg class="ico"><use href="#i-props"/></svg>属性</button>
                    <button class="tb pressed"><svg class="ico"><use href="#i-editbar"/></svg>编辑钢筋</button>
                    <button class="tb"><svg class="ico"><use href="#i-list"/></svg>构件列表</button>
                    <button class="tb"><svg class="ico"><use href="#i-pick"/></svg>拾取构件</button>
                </div>
                <div class="bar">
                    <span class="grip"></span>
                    <button class="tb"><svg class="ico"><use href="#i-twopt"/></svg>两点</button>
                    <button class="tb"><svg class="ico"><use href="#i-parallel"/></svg>平行</button>
                    <button class="tb"><svg class="ico"><use href="#i-angle"/></svg>点角<i class="caret"></i></button>
                    <button class="tb"><svg class="ico"><use href="#i-threept"/></svg>三点辅轴<i class="caret"></i></button>
                    <button class="tb"><svg class="ico"><use href="#i-brush"/></svg>删除辅轴</button>
                    <button class="tb"><svg class="ico"><use href="#i-dim"/></svg>尺寸标注</button>
                </div>
            </div>
            <div class="toolrow">
                <div class="bar">
                    <span class="grip"></span>
                    <button class="tb pressed"><svg class="ico"><use href="#i-cursor"/></svg>选择</button>
                    <button class="drop" aria-label="选择方式"><i class="caret"></i></button>
                    <span class="sep"></span>
                    <button class="tb"><svg class="ico"><use href="#i-point"/></svg>点</button>
                    <button class="tb"><svg class="ico"><use href="#i-rotpt"/></svg>旋转点</button>
                    <span class="sep"></span>
                    <button class="tb"><svg class="ico"><use href="#i-smart"/></svg>智能布置<i class="caret tight"></i></button>
                    <span class="sep"></span>
                    <button class="tb"><svg class="ico"><use href="#i-inplace"/></svg>原位标注</button>
                    <button class="tb"><svg class="ico"><use href="#i-coltable"/></svg>图元柱表</button>
                    <button class="tb"><svg class="ico"><use href="#i-adjust"/></svg>调整柱端头</button>
                    <button class="tb"><svg class="ico"><use href="#i-wallcol"/></svg>按墙位置绘制柱<i class="caret"></i></button>
                    <button class="tb"><svg class="ico"><use href="#i-auto"/></svg>自动判断边角柱</button>
                    <button class="tb"><svg class="ico"><use href="#i-check"/></svg>查改标注<i class="caret"></i></button>
                </div>
            </div>

            <svg class="canvas" role="img" aria-label="轴网平面">
                <rect x="246" y="163" width="18" height="18" fill="#7a00f5"/>
                <rect x="381" y="163" width="19" height="19" fill="#007cf5"/>
                <rect x="381.500" y="163.500" width="18" height="18" fill="none" stroke="#fff" stroke-dasharray="5 3"/>
                <path class="green" d="M52.500 0v461M0 37.500h120M0 172.500h120M0 307.500h120M0 442.500h120"/>
                <path class="green" d="M43 27l19 19M43 162l19 19M43 297l19 19M43 432l19 19"/>
                <path class="red" d="M120.500 0v455M255.500 0v461M390.500 0v461M525.500 0v461M660.500 0v461M795.500 0v461M929.500 0v461"/>
                <path class="red" d="M120 37.500h810M120 172.500h810M120 307.500h810M120 442.500h810"/>
                <g class="green">
                    <circle cx="13" cy="37" r="12.500"/><circle cx="13" cy="172" r="12.500"/><circle cx="13" cy="307" r="12.500"/><circle cx="13" cy="442" r="12.500"/>
                    <circle cx="120" cy="449" r="12.500"/><circle cx="255" cy="449" r="12.500"/><circle cx="390" cy="449" r="12.500"/><circle cx="525" cy="449" r="12.500"/><circle cx="660" cy="449" r="12.500"/><circle cx="795" cy="449" r="12.500"/><circle cx="930" cy="449" r="12.500"/>
                </g>
                <g class="labels">
                    <text x="14" y="43">E</text><text x="15" y="178">D</text><text x="15" y="313">C</text><text x="14" y="448">B</text>
                    <text x="121" y="455">1</text><text x="256" y="455">2</text><text x="391" y="455">3</text><text x="526" y="455">4</text><text x="661" y="455">5</text><text x="796" y="455">6</text><text x="931" y="455">7</text>
                    <text transform="translate(36 100) rotate(-90)">3000</text>
                    <text transform="translate(36 235) rotate(-90)">3000</text>
                    <text transform="translate(36 370) rotate(-90)">3000</text>
                </g>
                <path d="M53 412V374h-2l4-11 4 11h-2v38z" fill="#0f0"/>
                <path d="M55 410h37v-2l12 4-12 5v-3H55z" fill="#f00"/>
                <text class="ax" x="64" y="376" fill="#0f0">Y</text>
                <text class="ax" x="92" y="401" fill="#f00">X</text>
            </svg>

            <!-- Snap bar -->
            <div class="toolrow snapbar">
                <div class="bar">
                    <span class="grip"></span>
                    <button class="tb"><svg class="ico"><use href="#i-ortho"/></svg>正交</button>
                    <button class="tb pressed"><svg class="ico"><use href="#i-snap"/></svg>对象捕捉</button>
                    <button class="tb pressed"><svg class="ico"><use href="#i-dyn"/></svg>动态输入</button>
                </div>
                <div class="bar">
                    <span class="grip"></span>
                    <button class="tb"><svg class="ico"><use href="#i-cross"/></svg>交点</button>
                    <button class="tb pressed"><svg class="ico"><use href="#i-perp"/></svg>垂点</button>
                    <button class="tb pressed"><svg class="ico"><use href="#i-mid"/></svg>中点</button>
                    <button class="tb"><svg class="ico"><use href="#i-vertex"/></svg>顶点</button>
                    <button class="tb"><svg class="ico"><use href="#i-coord"/></svg>坐标</button>
                </div>
                <div class="bar">
                    <span class="grip"></span>
                    <span class="combo combo-s"><select aria-label="偏移方式"><option>不偏移</option></select></span>
                    <span class="sep"></span>
                    <label class="off" for="dx">X=</label>
                    <span class="spin"><input id="dx" type="text" value="0" disabled><i></i></span>
                    <span class="off unit">mm</span>
                    <label class="off" for="dy">Y=</label>
                    <span class="spin"><input id="dy" type="text" value="0" disabled><i></i></span>
                    <span class="off unit">mm</span>
                    <span class="sep"></span>
                    <input id="rot" class="tick" type="checkbox">
                    <label class="rot" for="rot">旋转</label>
                    <span class="spin wide"><input type="text" value="0.000" aria-label="旋转角度" disabled><i></i></span>
                    <span class="off deg">°</span>
                </div>
            </div>

            <!-- Rebar editor -->
            <section class="rebar-panel">
                <h2>编辑构件钢筋</h2>
                <div class="rebar-tools">
                    <button class="tb" aria-label="首条" disabled><svg class="ico"><use href="#i-first"/></svg></button>
                    <button class="tb" aria-label="上一条" disabled><svg class="ico"><use href="#i-prev"/></svg></button>
                    <button class="tb" aria-label="下一条"><svg class="ico"><use href="#i-next"/></svg></button>
                    <button class="tb" aria-label="末条"><svg class="ico"><use href="#i-last"/></svg></button>
                    <span class="sep"></span>
                    <button class="tb" aria-label="上移" disabled><svg class="ico"><use href="#i-up"/></svg></button>
                    <button class="tb" aria-label="下移"><svg class="ico"><use href="#i-down"/></svg></button>
                    <span class="sep"></span>
                    <button class="tb" disabled><svg class="ico"><use href="#i-insert"/></svg>插入</button>
                    <button class="tb" disabled><svg class="ico"><use href="#i-remove"/></svg>删除</button>
                    <button class="tb"><svg class="ico"><use href="#i-scale"/></svg>缩尺配筋</button>
                    <button class="tb"><svg class="ico"><use href="#i-info"/></svg>钢筋信息</button>
                    <button class="tb"><svg class="ico"><use href="#i-gallery"/></svg>钢筋图库</button>
                    <button class="tb"><svg class="ico"><use href="#i-other"/></svg>其他<i class="caret"></i></button>
                    <button class="tb">关闭</button>
                    <span class="sep"></span>
                    <span class="total">单构件钢筋总重(kg)：45.823</span>
                </div>
                <div class="rebar-box">
                    <table class="grid rebar-grid">
                        <colgroup>
                            <col class="r-no"><col class="r-name"><col class="r-dia"><col class="r-grade"><col class="r-fig"><col class="r-shape"><col class="r-formula"><col class="r-desc"><col class="r-len"><col class="r-count"><col class="r-lap"><col>
                        </colgroup>
                        <thead>
                            <tr><th></th><th>筋号</th><th class="hot">直径(mm)</th><th>级别</th><th>图号</th><th>图形</th><th>计算公式</th><th>公式描述</th><th>长度(mm)</th><th>根数</th><th>搭接</th><th>损耗(%)</th></tr>
                        </thead>
                        <tbody>
                            <tr class="line1">
                                <th class="hot">1*</th><td class="frozen">角筋.1</td><td class="cell">22</td>
                                <td class="mid"><svg class="rebar"><use href="#i-rebar"/></svg></td><td>1</td>
                                <td class="mid"><svg class="shape" width="196" height="26"><path d="M22 17h150" stroke="#000" stroke-width="2"/><text x="100" y="14" fill="#f00" text-anchor="middle">2980</text></svg></td>
                                <td>3000-20</td><td>层高-保护层</td><td>2980</td><td>4</td><td>0</td><td>0</td>
                            </tr>
                            <tr class="line2">
                                <th>2</th><td class="frozen">箍筋.1</td><td>8</td>
                                <td class="mid"><svg class="rebar"><use href="#i-rebar"/></svg></td><td>195</td>
                                <td class="mid"><svg class="shape" width="196" height="26"><path d="M81 2h33v21H81zM101 8l7-5M107 13l7-7" fill="none" stroke="#000" stroke-width="2"/><text x="53" y="18">360</text><text x="81" y="21" fill="#f00">360</text></svg></td>
                                <td>2*((400-2*20)+(400-2*20))+<br>2*(11.9*d)</td><td></td><td>1630</td><td>16</td><td>0</td><td>0</td>
                            </tr>
                            <tr class="blank"><th>3</th><td class="frozen"></td><td></td><td></td><td></td><td></td><td></td><td></td><td></td><td></td><td></td><td></td></tr>
                        </tbody>
                    </table>
                </div>
            </section>
        </main>
    </div>
</body>
</html>
```

FILE: styles.css
```css
* {
    box-sizing: border-box;
}
body {
    margin: 0;
    height: 100vh;
    display: flex;
    flex-direction: column;
    overflow: hidden;
    background-color: #ece9d8;
    color: #000;
    font-family: "Liberation Sans", "Noto Sans CJK SC", sans-serif;
    font-size: 12px;
    line-height: 16px;
}
button, select, input {
    font: inherit;
    color: inherit;
    margin: 0;
    padding: 0;
    border: 0;
    background: none;
}
button {
    white-space: nowrap;
}
.defs {
    position: absolute;
}
.ico {
    width: 16px;
    height: 16px;
    flex: none;
    display: block;
}
.titlestrip {
    flex: none;
    height: 4px;
    background: #0054e3;
    border-bottom: 1px solid #fff;
}

/* Menu */
.menubar {
    flex: none;
    display: flex;
    align-items: center;
    height: 25px;
    border-bottom: 1px solid #aca899;
}
.menubar .grip {
    margin: 0 6px 0 0;
    border-left: 0;
    width: 2px;
}
.menubar button {
    min-width: 52px;
    padding: 0 10px 0 1px;
    text-align: left;
}

/* Toolbars */
.toolrow {
    flex: none;
    display: flex;
    height: 26px;
    overflow: hidden;
}
.bar {
    flex: none;
    display: flex;
    align-items: center;
    height: 26px;
    border-top: 1px solid #fff;
    border-right: 1px solid #aca899;
    border-bottom: 1px solid #aca899;
}
.first-bar {
    padding-left: 4px;
}
.bar.pad {
    padding-left: 3px;
    border-left: 1px solid #fff;
}
.grip {
    width: 3px;
    height: 20px;
    margin: 0 1px 0 4px;
    border-left: 1px solid #fff;
    border-right: 1px solid #aca899;
}
.main-tools .grip {
    margin: 0 0 0 3px;
}
.sep {
    flex: none;
    width: 2px;
    height: 20px;
    margin: 0 2px;
    border-left: 1px solid #aca899;
    border-right: 1px solid #fff;
}
.tb {
    flex: none;
    display: flex;
    align-items: center;
    gap: 4px;
    height: 22px;
    padding: 0 3px 0 2px;
    border: 1px solid transparent;
}
.tb:disabled {
    color: #aca899;
    text-shadow: 1px 1px #fff;
}
.tb.pressed {
    background-color: #f6f4ec;
    border-color: #aca899 #fff #fff #aca899;
}
.caret {
    width: 12px;
    height: 3px;
    margin-left: -4px;
    background: linear-gradient(#000, #000) 6px 0 / 5px 1px no-repeat,
        linear-gradient(#000, #000) 7px 1px / 3px 1px no-repeat,
        linear-gradient(#000, #000) 8px 2px / 1px 1px no-repeat;
}
.caret.tight {
    width: 7px;
    background-position: 2px 0, 3px 1px, 4px 2px;
}
.drop {
    width: 12px;
}
.drop .caret {
    display: block;
}
.more {
    width: 10px;
    height: 16px;
    margin: 0 4px 0 9px;
}
.more.far {
    margin-left: 19px;
}
.more svg {
    width: 10px;
    height: 16px;
    display: block;
}

/* Drop-downs */
.combos {
    padding-left: 8px;
    gap: 3px;
    padding-right: 4px;
}
.combo {
    position: relative;
    display: flex;
    align-items: center;
    width: 69px;
    height: 18px;
    background-color: #fff;
}
.combo select {
    flex: 1;
    min-width: 0;
    height: 18px;
    line-height: 16px;
    padding-left: 2px;
    appearance: none;
    outline: none;
}
.combo::after {
    content: "";
    position: absolute;
    right: 1px;
    top: 1px;
    width: 10px;
    height: 16px;
    pointer-events: none;
    background: linear-gradient(#000, #000) 2px 7px / 5px 1px no-repeat,
        linear-gradient(#000, #000) 3px 8px / 3px 1px no-repeat,
        linear-gradient(#000, #000) 4px 9px / 1px 1px no-repeat,
        #ece9d8;
}
.combo-s {
    width: 58px;
}
.combo-view {
    width: 60px;
    margin: 0 0 0 2px;
    padding-left: 2px;
}
.combo-view select {
    padding-left: 1px;
}

/* Work area */
.workspace {
    flex: 1;
    min-height: 0;
    display: flex;
}
.nav {
    flex: none;
    width: 165px;
    padding-top: 2px;
    display: flex;
    flex-direction: column;
}
.panel-title {
    flex: none;
    display: flex;
    align-items: center;
    height: 15px;
    border: 1px solid #aca899;
    font-size: 13px;
    line-height: 13px;
    overflow: hidden;
}
.panel-title span {
    flex: 1;
    white-space: nowrap;
}
.panel-title button {
    width: 10px;
    height: 10px;
    margin-right: 8px;
}
.panel-title button:last-child {
    margin-right: 4px;
}
.panel-title svg {
    width: 9px;
    height: 9px;
    display: block;
}
.panel-title.active {
    width: 162px;
    border: 0;
    background-color: #0054e3;
    color: #fff;
}
.panel-title .cut {
    margin-left: -5px;
}
.nav-tab {
    flex: none;
    width: 160px;
    height: 22px;
    padding-right: 4px;
    border-top: 1px solid #fff;
    border-bottom: 1px solid #aca899;
}
.panel-title + .nav-tab {
    margin-top: 1px;
}
.nav-tools {
    flex: none;
    display: flex;
    align-items: center;
    gap: 7px;
    width: 160px;
    height: 27px;
    margin-top: 1px;
    padding-left: 2px;
    border-right: 1px solid #aca899;
}
.tree, .tree ul {
    list-style: none;
    margin: 0;
    padding: 0;
}
.tree {
    flex: 1;
    width: 160px;
    padding-top: 1px;
    border-top: 1px solid #7f9db9;
    border-right: 1px solid #7f9db9;
    background-color: #fff;
}
.tree > li {
    position: relative;
}
.tree > li::before {
    content: "";
    position: absolute;
    left: 11px;
    top: 8px;
    height: 100%;
    border-left: 1px dotted #aca899;
}
.tree > li:last-child::before {
    display: none;
}
.node, .tree ul li {
    display: flex;
    align-items: center;
    height: 16px;
    white-space: nowrap;
}
.node {
    position: relative;
    padding-left: 7px;
}
.node .ico {
    margin: 0 5px 0 6px;
}
.node::after {
    content: "";
    position: absolute;
    left: 17px;
    top: 8px;
    width: 5px;
    border-top: 1px dotted #aca899;
}
.tree ul li {
    position: relative;
    padding-left: 41px;
}
.tree ul li::before {
    content: "";
    position: absolute;
    left: 31px;
    top: 0;
    width: 9px;
    height: 9px;
    border-left: 1px dotted #aca899;
    border-bottom: 1px dotted #aca899;
}
.tree ul li:not(:last-child)::after {
    content: "";
    position: absolute;
    left: 31px;
    top: 9px;
    height: 7px;
    border-left: 1px dotted #aca899;
}
.tree ul span {
    margin-left: 4px;
    padding: 0 5px 0 1px;
}
.tree .current {
    background-color: #ece9d8;
}
.box {
    flex: none;
    width: 9px;
    height: 9px;
    border: 1px solid #7f9db9;
    background: linear-gradient(#000, #000) center / 5px 1px no-repeat, #fbfaf6;
}
.box.plus {
    background: linear-gradient(#000, #000) center / 5px 1px no-repeat,
        linear-gradient(#000, #000) center / 1px 5px no-repeat, #fbfaf6;
}

/* Grids */
.grid {
    border-collapse: separate;
    border-spacing: 0;
    table-layout: fixed;
    background-color: #fff;
}
.grid th, .grid td {
    padding: 0 0 0 2px;
    border-right: 1px solid #c0c0c0;
    border-bottom: 1px solid #c0c0c0;
    font-weight: normal;
    text-align: left;
    white-space: nowrap;
    overflow: hidden;
}
.grid th {
    padding: 0;
    text-align: center;
    background: linear-gradient(#fff, #ece9d8);
}
.grid thead .hot {
    background: linear-gradient(#f8dca4, #f0bc58);
    color: #5c0a4c;
}
.grid tbody .hot {
    background: #ffd48c;
    color: #5c0a4c;
}
.rebar {
    width: 12px;
    height: 12px;
    vertical-align: -2px;
}

/* Property editor */
.props {
    flex: none;
    width: 228px;
    padding-top: 2px;
    display: flex;
    flex-direction: column;
}
.prop-box {
    flex: 1;
    min-height: 0;
    display: flex;
    margin: 2px 1px 0 1px;
    padding: 1px 0 1px 1px;
    overflow: hidden;
    border: 1px solid #7f9db9;
    background-color: #fff;
}
.prop-grid {
    width: 204px;
    flex: none;
    align-self: flex-start;
}
.c-no {
    width: 21px;
}
.c-name {
    width: 121px;
}
.prop-grid thead th {
    height: 22px;
}
.prop-grid tbody th, .prop-grid td {
    height: 19px;
}
.prop-grid td:nth-child(2) {
    padding-left: 20px;
}
.prop-grid .key {
    color: #00f;
}
.prop-grid .dim {
    color: #808080;
}
.prop-grid .selected td {
    background-color: #dfe9f7;
}
.prop-grid .selected td:nth-child(2) {
    background-color: #316ac5;
    color: #fff;
}
.prop-grid td.group {
    padding-left: 3px;
}
.group .box {
    display: inline-block;
    width: 12px;
    height: 12px;
    margin-right: 5px;
    vertical-align: -2px;
    border-color: #aca899;
    background-size: 8px 1px, 1px 8px;
}
.prop-grid .child td:nth-child(2) {
    padding-left: 30px;
    background: linear-gradient(#c0c0c0, #c0c0c0) 8px 0 / 1px 100% no-repeat,
        linear-gradient(#c0c0c0, #c0c0c0) 9px 9px / 16px 1px no-repeat;
}
.scroll {
    flex: none;
    width: 16px;
    margin-left: 2px;
    display: flex;
    flex-direction: column;
    background: linear-gradient(to right, #f3f1ec, #fefefb);
}
.scroll button {
    flex: none;
    height: 16px;
    border: 1px solid #9ebbf5;
    border-radius: 2px;
    background-color: #c5d5fb;
}
.scroll button::before {
    content: "";
    display: block;
    width: 5px;
    height: 5px;
    margin: 4px auto 0;
    border: solid #4d6185;
    border-width: 2px 0 0 2px;
    transform: rotate(45deg);
}
.scroll .arrow-down {
    margin-top: auto;
}
.scroll .arrow-down::before {
    margin-top: 1px;
    transform: rotate(225deg);
}
.thumb {
    flex: 0 1 290px;
    display: flex;
    align-items: center;
    justify-content: center;
    margin-top: 1px;
    border: 1px solid #9ebbf5;
    border-radius: 2px;
    background: linear-gradient(to right, #d2dffd, #b9ccf8);
}
.thumb i {
    width: 7px;
    height: 8px;
    background: repeating-linear-gradient(#fff 0 1px, #8cb0f8 1px 2px);
}
.preview {
    flex: none;
    width: 224px;
    height: 148px;
    margin: 5px 0 0 2px;
    background-color: #000;
}
.preview text {
    fill: #fff;
    text-anchor: middle;
}

/* Drawing area */
.draw {
    flex: 1;
    min-width: 0;
    padding: 1px 0 0 2px;
    display: flex;
    flex-direction: column;
}
.canvas {
    flex: 1;
    min-height: 0;
    width: 100%;
    background-color: #000;
}
.canvas .green {
    fill: none;
    stroke: #008000;
}
.canvas .red {
    fill: none;
    stroke: #f00;
}
.labels text {
    font: 18px "Noto Sans", sans-serif;
    fill: #ddd;
    text-anchor: middle;
}
.ax {
    font-size: 14px;
}

/* Snap bar */
.snapbar .bar:last-child .combo {
    margin: 0 1px 0 3px;
}
.off {
    color: #aca899;
    text-shadow: 1px 1px #fff;
}
.spin {
    position: relative;
    width: 55px;
    height: 18px;
    margin-left: 2px;
    border: 1px solid #fff;
}
.spin.wide {
    width: 66px;
    margin-left: 6px;
}
.spin input {
    width: 100%;
    height: 16px;
    padding-right: 17px;
    text-align: right;
    color: #aca899;
}
.spin i {
    position: absolute;
    right: 3px;
    top: 3px;
    border: 3px solid transparent;
    border-top: 0;
    border-bottom-color: #aca899;
}
.spin i::after {
    content: "";
    position: absolute;
    left: -3px;
    top: 7px;
    border: 3px solid transparent;
    border-bottom: 0;
    border-top-color: #aca899;
}
.unit {
    padding: 0 2px 0 1px;
    font-size: 10px;
}
.unit + .sep {
    margin-left: 0;
}
.tick {
    appearance: none;
    width: 11px;
    height: 11px;
    margin: 0 7px 0 2px;
    border: 1px solid #aca899;
    background-color: #fff;
}
.deg {
    width: 14px;
    padding-left: 3px;
}

/* Rebar editor */
.rebar-panel {
    flex: none;
}
.rebar-panel h2 {
    height: 21px;
    margin: 5px 0 0 1px;
    padding: 1px 4px;
    border: 1px solid #dcd8c4;
    border-right: 0;
    border-radius: 3px 0 0 3px;
    background: linear-gradient(#f8f7f2, #efede2);
    font-size: 12px;
    font-weight: normal;
    line-height: 17px;
}
.rebar-tools {
    display: flex;
    align-items: center;
    height: 26px;
}
.rebar-tools .tb[aria-label] {
    width: 23px;
}
.total {
    margin-left: 6px;
}
.rebar-box {
    height: 100px;
    padding-top: 1px;
    overflow: hidden;
    border-top: 1px solid #7f9db9;
    border-left: 1px solid #7f9db9;
    background-color: #fff;
}
.rebar-grid {
    width: 100%;
}
.rebar-grid thead th {
    height: 20px;
}
.r-no, .r-fig {
    width: 33px;
}
.r-name {
    width: 73px;
}
.r-dia {
    width: 56px;
}
.r-grade {
    width: 36px;
}
.r-shape {
    width: 201px;
}
.r-formula {
    width: 166px;
}
.r-desc {
    width: 156px;
}
.r-len {
    width: 61px;
}
.r-count, .r-lap {
    width: 38px;
}
.line1 > * {
    height: 29px;
}
.line2 > * {
    height: 34px;
    line-height: 12px;
}
.blank > * {
    height: 19px;
}
.line1 td, .line2 td {
    background-color: #ccffdc;
}
.line1 td.cell {
    background-color: #b4e6d8;
}
.rebar-grid td.frozen {
    border-right-color: #000;
}
.grid td.mid {
    padding: 0;
    text-align: center;
}
.shape {
    display: block;
    margin: 0 auto;
}
```
